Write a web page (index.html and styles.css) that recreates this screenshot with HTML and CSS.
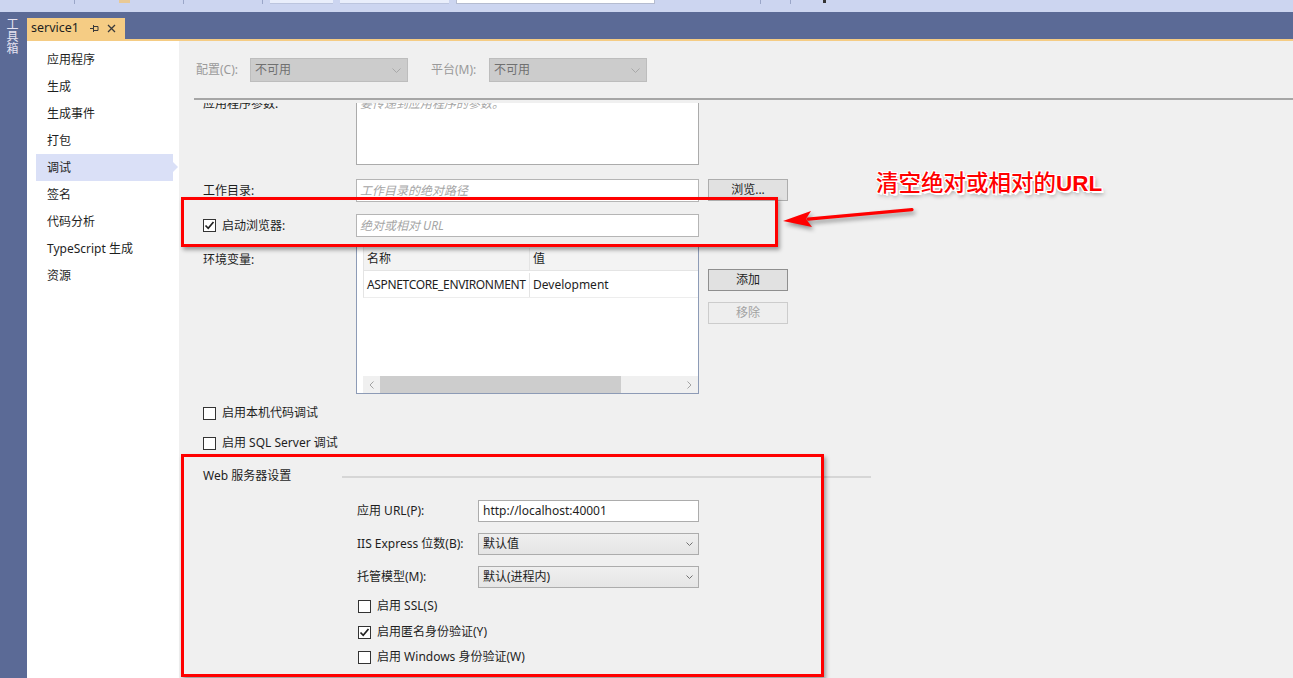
FILE: index.html
```html
<!DOCTYPE html>
<html lang="zh-CN">
<head>
    <meta charset="UTF-8">
    <meta name="viewport" content="width=device-width, initial-scale=1.0">
    <title>service1 - 调试</title>
    <link rel="stylesheet" href="styles.css">
</head>
<body>
    <div class="toolbar">
        <span class="tb-sep s1"></span>
        <span class="tb-flag"></span>
        <span class="tb-sep s2"></span>
        <span class="tb-sep s3"></span>
        <span class="tb-box b1"></span>
        <span class="tb-box b2"></span>
        <span class="tb-box b3"></span>
        <span class="tb-sep s4"></span>
        <span class="tb-sep s5"></span>
        <span class="tb-drop"></span>
    </div>

    <div class="main">
        <div class="toolbox"><span>工具箱</span></div>

        <div class="doc">
            <div class="tabs">
                <div class="tab">
                    <span class="tab-title">service1</span>
                    <svg class="tab-pin" width="9" height="9" viewBox="0 0 9 9">
                        <path d="M0 4.5H3M3.5 1V8M3.5 2.5H8V6.5H3.5" fill="none" stroke="#3a3a3a" stroke-width="1"/>
                    </svg>
                    <svg class="tab-close" width="9" height="9" viewBox="0 0 9 9">
                        <path d="M1 1L8 8M8 1L1 8" stroke="#3a3a3a" stroke-width="1.3"/>
                    </svg>
                </div>
            </div>
            <div class="tab-line"></div>

            <div class="page">
                <div class="nav">
                    <div class="nav-item">应用程序</div>
                    <div class="nav-item">生成</div>
                    <div class="nav-item">生成事件</div>
                    <div class="nav-item">打包</div>
                    <div class="nav-item active">调试</div>
                    <div class="nav-item">签名</div>
                    <div class="nav-item">代码分析</div>
                    <div class="nav-item">TypeScript 生成</div>
                    <div class="nav-item">资源</div>
                </div>

                <div class="content">
                    <div class="config">
                        <span class="config-label">配置(C):</span>
                        <div class="combo disabled">
                            <span>不可用</span>
                            <svg width="9" height="5" viewBox="0 0 9 5"><path d="M0.5 0.5L4.5 4.5L8.5 0.5" fill="none" stroke="#a8a8a8"/></svg>
                        </div>
                        <span class="config-label second">平台(M):</span>
                        <div class="combo disabled">
                            <span>不可用</span>
                            <svg width="9" height="5" viewBox="0 0 9 5"><path d="M0.5 0.5L4.5 4.5L8.5 0.5" fill="none" stroke="#a8a8a8"/></svg>
                        </div>
                    </div>
                    <div class="rule"></div>

                    <div class="scroll">
                        <div class="scroll-inner">
                            <div class="row">
                                <div class="label top">应用程序参数:</div>
                                <div class="field area"><span class="hint">要传递到应用程序的参数。</span></div>
                            </div>

                            <div class="row r-workdir">
                                <div class="label">工作目录:</div>
                                <div class="field"><span class="hint">工作目录的绝对路径</span></div>
                                <div class="btn side">浏览...</div>
                            </div>

                            <div class="row r-launch">
                                <div class="label">
                                    <span class="box">
                                        <svg width="11" height="11" viewBox="0 0 11 11"><path d="M1.5 5.5L4.2 8.3L9.5 2" fill="none" stroke="#222" stroke-width="1.7"/></svg>
                                    </span>
                                    启动浏览器:
                                </div>
                                <div class="field"><span class="hint">绝对或相对 URL</span></div>
                            </div>

                            <div class="row r-env">
                                <div class="label env-label">环境变量:</div>
                                <div class="grid">
                                    <div class="grid-head">
                                        <div class="cell c1">名称</div>
                                        <div class="cell c2">值</div>
                                    </div>
                                    <div class="grid-row">
                                        <div class="cell c1 caps">ASPNETCORE_ENVIRONMENT</div>
                                        <div class="cell c2">Development</div>
                                    </div>
                                    <div class="grid-fill"></div>
                                    <div class="hscroll">
                                        <span class="arrow">
                                            <svg width="5" height="8" viewBox="0 0 5 8"><path d="M4.5 0.5L1 4L4.5 7.5" fill="none" stroke="#a3a3a3"/></svg>
                                        </span>
                                        <span class="thumb"></span>
                                        <span class="track"></span>
                                        <span class="arrow">
                                            <svg width="5" height="8" viewBox="0 0 5 8"><path d="M0.5 0.5L4 4L0.5 7.5" fill="none" stroke="#a3a3a3"/></svg>
                                        </span>
                                    </div>
                                </div>
                                <div class="env-buttons">
                                    <div class="btn add">添加</div>
                                    <div class="btn remove">移除</div>
                                </div>
                            </div>

                            <div class="check c-native"><span class="box"></span>启用本机代码调试</div>
                            <div class="check c-sql"><span class="box"></span>启用 SQL Server 调试</div>

                            <div class="group-title">
                                <span class="group-name">Web 服务器设置</span>
                                <span class="group-line"></span>
                            </div>

                            <div class="wrow w-url">
                                <div class="wlabel">应用 URL(P):</div>
                                <div class="wfield">http://localhost:40001</div>
                            </div>
                            <div class="wrow w-mid">
                                <div class="wlabel">IIS Express 位数(B):</div>
                                <div class="select">
                                    <span>默认值</span>
                                    <svg width="7" height="4" viewBox="0 0 7 4"><path d="M0.5 0.5L3.5 3.5L6.5 0.5" fill="none" stroke="#707070"/></svg>
                                </div>
                            </div>
                            <div class="wrow w-mid">
                                <div class="wlabel">托管模型(M):</div>
                                <div class="select">
                                    <span>默认(进程内)</span>
                                    <svg width="7" height="4" viewBox="0 0 7 4"><path d="M0.5 0.5L3.5 3.5L6.5 0.5" fill="none" stroke="#707070"/></svg>
                                </div>
                            </div>

                            <div class="check web c-ssl"><span class="box"></span>启用 SSL(S)</div>
                            <div class="check web c-anon">
                                <span class="box">
                                    <svg width="11" height="11" viewBox="0 0 11 11"><path d="M1.5 5.5L4.2 8.3L9.5 2" fill="none" stroke="#222" stroke-width="1.7"/></svg>
                                </span>启用匿名身份验证(Y)
                            </div>
                            <div class="check web c-win"><span class="box"></span>启用 Windows 身份验证(W)</div>
                        </div>
                    </div>
                </div>
            </div>
        </div>
    </div>

    <!-- annotation marks drawn over the screenshot -->
    <div class="mark mark-launch"></div>
    <div class="mark mark-web"></div>
    <div class="note">清空绝对或相对的<b>URL</b></div>
    <svg class="note-arrow" width="150" height="40" viewBox="0 0 150 40">
        <path d="M33 19.2L137 9.6" stroke="#f00" stroke-width="3.2" stroke-linecap="round"/>
        <path d="M8 21L36 11L31 19L37 27Z" fill="#f00"/>
    </svg>
</body>
</html>
```

FILE: styles.css
```css
* {
    box-sizing: border-box;
}

html, body {
    margin: 0;
    width: 1293px;
    height: 678px;
    overflow: hidden;
}

body {
    position: relative;
    background-color: #5b6a96;
    font-family: "Noto Sans", "Noto Sans CJK SC", sans-serif;
    font-size: 12px;
    line-height: 1;
    color: #1e1e1e;
}

/* top toolbar strip, mostly cut off */
.toolbar {
    height: 12px;
    background-color: #ccd5f0;
    display: flex;
    align-items: flex-start;
}

.tb-sep {
    width: 1px;
    height: 4px;
    background-color: #9aa6c8;
}

.tb-sep.s1 { margin-left: 74px; }
.tb-sep.s2 { margin-left: 53px; }
.tb-sep.s3 { margin-left: 78px; }
.tb-sep.s4 { margin-left: 105px; }
.tb-sep.s5 { margin-left: 29px; }

.tb-flag {
    margin-left: 44px;
    width: 11px;
    height: 3px;
    background-color: #e9c995;
}

.tb-box {
    height: 4px;
    margin-left: 7px;
    background-color: #e9eefb;
    border-bottom: 1px solid #bcc5de;
}

.tb-box.b1 { width: 63px; }
.tb-box.b2 { width: 109px; }
.tb-box.b3 {
    width: 199px;
    background-color: #fff;
    border: 1px solid #b5bcd0;
    border-top: none;
}

.tb-drop {
    margin-left: 32px;
    width: 3px;
    height: 3px;
    background-color: #333;
}

.main {
    display: flex;
    height: 666px;
}

.toolbox {
    width: 27px;
    padding: 6px 0 0 6px;
    color: #e6e3f2;
}

.toolbox span {
    writing-mode: vertical-rl;
    font-size: 12px;
    font-family: "Noto Sans CJK SC", sans-serif;
}

.doc {
    flex: 1;
    display: flex;
    flex-direction: column;
    min-width: 0;
}

.tabs {
    height: 27px;
    display: flex;
    align-items: flex-end;
}

.tab {
    width: 98px;
    height: 21px;
    background-color: #f5cc84;
    display: flex;
    align-items: center;
    padding-left: 4px;
}

.tab-title {
    font-size: 12.5px;
}

.tab-pin {
    margin-left: 11px;
}

.tab-close {
    margin-left: 8px;
}

.tab-line {
    height: 2px;
    background-color: #f5cc84;
}

.page {
    flex: 1;
    display: flex;
    min-height: 0;
}

.nav {
    width: 152px;
    background-color: #fff;
    padding: 5px 0 0 9px;
}

.nav-item {
    position: relative;
    width: 137px;
    height: 27px;
    line-height: 27px;
    padding-left: 11px;
}

.nav-item.active {
    background-color: #dae0f7;
}

.nav-item.active::after {
    content: "";
    position: absolute;
    right: -5px;
    top: 8px;
    border-left: 5px solid #dae0f7;
    border-top: 5px solid transparent;
    border-bottom: 5px solid transparent;
}

.content {
    flex: 1;
    background-color: #f0f0f0;
    display: flex;
    flex-direction: column;
    min-width: 0;
}

.config {
    margin-top: 17px;
    padding-left: 17px;
    height: 24px;
    display: flex;
    align-items: center;
}

.config-label {
    width: 54px;
    color: #9a9a9a;
}

.config-label.second {
    margin-left: 23px;
    width: 58px;
}

.combo {
    width: 158px;
    height: 24px;
    display: flex;
    align-items: center;
    justify-content: space-between;
    padding: 0 6px 0 4px;
}

.combo.disabled {
    background-color: #cccccc;
    border: 1px solid #bdbdbd;
    color: #707070;
}

.rule {
    margin: 16px 0 3px 15px;
    height: 2px;
    background-color: #a6a6a6;
}

.scroll {
    flex: 1;
    overflow: hidden;
}

.scroll-inner {
    margin-top: -8px;
    padding-left: 24px;
}

.row {
    display: flex;
    align-items: flex-start;
}

.label {
    width: 153px;
    height: 23px;
    display: flex;
    align-items: center;
}

.label.top {
    height: auto;
    padding-top: 3px;
}

.field {
    width: 343px;
    height: 23px;
    background-color: #fff;
    border: 1px solid #b5b5b5;
    display: flex;
    align-items: center;
    padding-left: 3px;
}

.field.area {
    height: 70px;
    align-items: flex-start;
    padding-top: 2px;
    border-color: #ababab;
}

.hint {
    color: #a6a6a6;
    font-style: italic;
}

.btn {
    width: 80px;
    height: 22px;
    background-color: #e1e1e1;
    border: 1px solid #adadad;
    display: flex;
    align-items: center;
    justify-content: center;
}

.btn.side {
    margin-left: 9px;
}

.r-workdir { margin-top: 14px; }
.r-launch { margin-top: 12px; }
.r-env { margin-top: 8px; }

.box {
    width: 13px;
    height: 13px;
    border: 1px solid #333;
    background-color: #fff;
    margin-right: 6px;
    display: flex;
    align-items: center;
    justify-content: center;
    flex-shrink: 0;
}

.env-label {
    margin-top: 3px;
}

.grid {
    width: 343px;
    height: 149px;
    background-color: #fff;
    border: 1px solid #8d9bb6;
    display: flex;
    flex-direction: column;
}

.grid-head,
.grid-row {
    display: flex;
    margin-left: 6px;
    border-left: 1px solid #e4e4e4;
}

.grid-head {
    height: 25px;
    padding-top: 2px;
    background-color: #f3f3f3;
    border-bottom: 1px solid #e4e4e4;
}

.grid-row {
    height: 27px;
    padding-top: 2px;
    border-bottom: 1px solid #ededed;
}

.cell {
    display: flex;
    align-items: center;
    padding-left: 3px;
}

.cell.c1 {
    width: 166px;
    border-right: 1px solid #e4e4e4;
    white-space: nowrap;
    overflow: hidden;
}

.cell.caps {
    letter-spacing: -0.35px;
}

.cell.c2 {
    flex: 1;
}

.grid-fill {
    flex: 1;
}

.hscroll {
    height: 17px;
    margin-left: 6px;
    background-color: #f0f0f0;
    display: flex;
    align-items: stretch;
}

.hscroll .arrow {
    width: 17px;
    display: flex;
    align-items: center;
    justify-content: center;
}

.hscroll .thumb {
    width: 241px;
    background-color: #cdcdcd;
}

.hscroll .track {
    flex: 1;
}

.env-buttons {
    margin-left: 9px;
    display: flex;
    flex-direction: column;
}

.btn.add {
    margin-top: 24px;
    border-color: #8f8f8f;
}

.btn.remove {
    margin-top: 11px;
    background-color: #eeeeee;
    border-color: #cccccc;
    color: #a2a2a2;
}

.check {
    height: 20px;
    display: flex;
    align-items: center;
}

.c-native { margin-top: 9px; }
.c-sql { margin-top: 10px; }

.group-title {
    margin-top: 13px;
    height: 20px;
    display: flex;
    align-items: center;
}

.group-name {
    width: 139px;
}

.group-line {
    width: 529px;
    height: 2px;
    margin-top: 2px;
    background-color: #d6d6d6;
}

.wrow {
    display: flex;
    align-items: center;
    padding-left: 154px;
    height: 22px;
}

.w-url { margin-top: 14px; }
.w-mid { margin-top: 11px; }

.wlabel {
    width: 121px;
}

.wfield,
.select {
    width: 221px;
    height: 22px;
    border: 1px solid #acacac;
    display: flex;
    align-items: center;
    padding-left: 4px;
}

.wfield {
    background-color: #fff;
}

.select {
    justify-content: space-between;
    padding-right: 5px;
    background: linear-gradient(#efefef, #e5e5e5);
}

.check.web {
    padding-left: 155px;
}

.c-ssl { margin-top: 8px; }
.c-anon { margin-top: 6px; }
.c-win { margin-top: 5px; }

/* red annotation marks */
.mark {
    position: absolute;
    border: 3px solid #f00;
    box-shadow: 2px 3px 4px rgba(0, 0, 0, 0.35);
}

.mark-launch {
    left: 181px;
    top: 197px;
    width: 597px;
    height: 50px;
}

.mark-web {
    left: 181px;
    top: 454px;
    width: 643px;
    height: 223px;
}

.note {
    position: absolute;
    left: 876px;
    top: 170px;
    font-family: "Noto Sans CJK SC", sans-serif;
    font-size: 22.5px;
    font-weight: 500;
    color: #f00;
    white-space: nowrap;
    text-shadow:
        1px 0 0 #fff, -1px 0 0 #fff, 0 1px 0 #fff, 0 -1px 0 #fff,
        1px 1px 0 #fff, -1px -1px 0 #fff, 1px -1px 0 #fff, -1px 1px 0 #fff,
        2px 2px 0 #fff, 2px 3px 4px rgba(0, 0, 0, 0.45);
}

.note b {
    font-family: "Liberation Sans", Arial, sans-serif;
    font-weight: bold;
}

.note-arrow {
    position: absolute;
    left: 775px;
    top: 200px;
    filter: drop-shadow(2px 3px 2px rgba(0, 0, 0, 0.4));
}
```
